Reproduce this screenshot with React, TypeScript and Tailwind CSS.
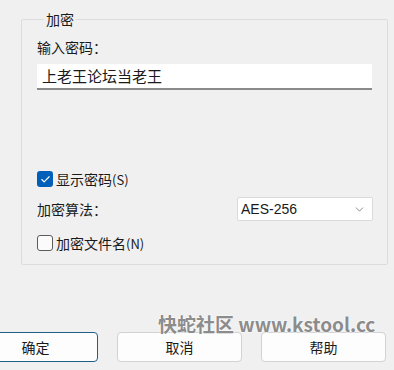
import { Check, ChevronDown } from "lucide-react";

const font = { fontFamily: '"Noto Sans CJK SC", "Liberation Sans", sans-serif' };

const CheckRow = ({ checked, label, hotkey }: { checked: boolean; label: string; hotkey: string }) => (
  <div className="flex items-center gap-[3px] h-4">
    {checked ? (
      <span className="w-4 h-4 rounded-[3px] bg-[#005fb8] flex items-center justify-center">
        <Check size={11} strokeWidth={2.5} className="text-white" />
      </span>
    ) : (
      <span className="w-4 h-4 rounded-[3px] border border-[#5c5c5c] bg-[#fbfbfb]" />
    )}
    <span className="text-[14px] leading-5 text-[#1a1a1a]">
      {label}
      <span className="text-[13px]">({hotkey})</span>
    </span>
  </div>
);

const DlgButton = ({ text, focused }: { text: string; focused?: boolean }) => (
  <button
    className={`w-[125px] h-[30px] shrink-0 rounded-[4px] bg-[#fdfdfd] text-[14px] text-[#1a1a1a] border ${
      focused ? "border-[#1f5f86]" : "border-[#d2d2d2]"
    }`}
  >
    {text}
  </button>
);

export default function App() {
  return (
    <div className="relative w-[394px] h-[370px] bg-[#f0f0f0] overflow-hidden" style={font}>
      <fieldset className="ml-[21px] mt-[9px] w-[367px] h-[256px] border border-[#dcdcdc] px-[15px] rounded-[2px]">
        <legend className="ml-[7px] px-[2px] text-[14px] leading-5 text-[#1a1a1a]">加密</legend>
        <div className="mt-[8px] text-[14px] leading-5 text-[#1a1a1a]">输入密码：</div>
        <div className="mt-[7px] h-[26px] bg-white border-b-2 border-[#8a8a8a] pl-[5px] flex items-center text-[15px] text-[#1a1a1a]">
          上老王论坛当老王
        </div>
        <div className="mt-[81px]">
          <CheckRow checked label="显示密码" hotkey="S" />
        </div>
        <div className="mt-[10px] flex items-center justify-between h-6">
          <span className="text-[14px] leading-5 text-[#1a1a1a]">加密算法：</span>
          <div className="w-[136px] h-6 mr-[-1px] bg-white border border-[#dadada] rounded-[2px] flex items-center justify-between pl-[3px] pr-[6px]">
            <span className="text-[14px] text-[#1a1a1a]" style={{ fontFamily: '"Liberation Sans", sans-serif' }}>
              AES-256
            </span>
            <ChevronDown size={13} strokeWidth={1.25} className="text-[#555]" />
          </div>
        </div>
        <div className="mt-[14px]">
          <CheckRow checked={false} label="加密文件名" hotkey="N" />
        </div>
      </fieldset>

      <div className="mt-[67px] ml-[-27px] flex gap-[19px]">
        <DlgButton text="确定" focused />
        <DlgButton text="取消" />
        <DlgButton text="帮助" />
      </div>

      <div
        className="absolute left-[158px] top-[314px] text-[19px] leading-none font-bold text-[#8c8c8c] whitespace-nowrap"
        style={{ textShadow: "0 0 2px #fff, 0 0 2px #fff" }}
      >
        快蛇社区 www.kstool.cc
      </div>
    </div>
  );
}
